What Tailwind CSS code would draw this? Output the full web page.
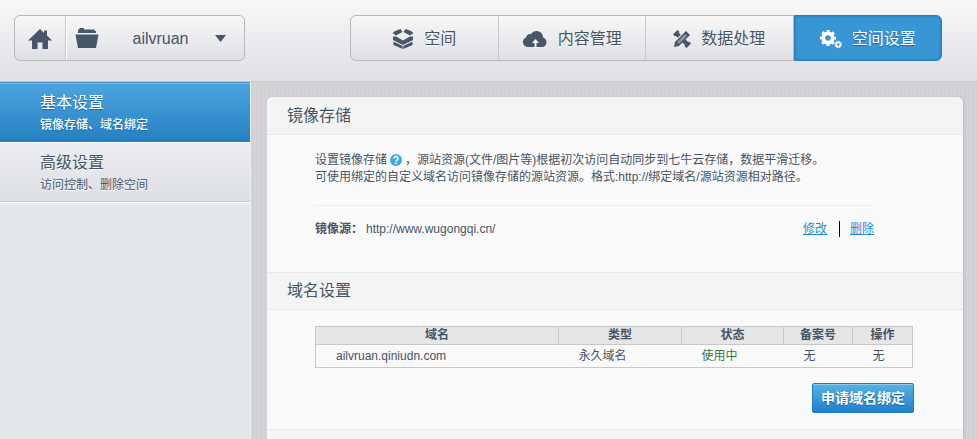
<!DOCTYPE html>
<html lang="zh-CN">

<head>
    <meta charset="UTF-8">
    <title>空间设置</title>
    <script src="https://cdn.jsdelivr.net/npm/@tailwindcss/browser@4"></script>
</head>

<body class="min-h-screen flex flex-col bg-[#d2d3d7] bg-[repeating-linear-gradient(90deg,#d0d1d5_0px,#d0d1d5_2px,#d3d4d8_2px,#d3d4d8_4px)] text-xs text-[#475466] font-['Liberation_Sans','Noto_Sans_CJK_SC',sans-serif]">
    <header class="flex justify-between items-start pt-[15px] pb-5 pl-[14px] pr-[35px] bg-linear-to-b from-[#f8f8f8] to-[#dfe0e6] border-b border-[#c6c8cf] text-base [text-shadow:0_1px_0_#fff]">
        <div class="flex w-[231px] h-[46px] border border-[#b8b8b8] rounded-md bg-linear-to-b from-[#f8f8f8] to-[#dfe0e6]">
            <a href="#" aria-label="首页" class="w-[51px] flex items-center justify-center border-r border-[#c8c9cc]">
                <svg class="w-6 h-5 mt-0.5" viewBox="0 0 24 20" fill="#475669">
                    <path d="M12 0 L16 4 V1.500 H19 V6.500 L24 11.500 H20 V20 H14.500 V13.500 H9.500 V20 H4 V11.500 H0 Z" />
                </svg>
            </a>
            <button type="button" class="flex-1 flex items-center border-l border-white pl-2 pr-[18px]">
                <svg class="w-6 h-5" viewBox="0 0 24 20" fill="#475669">
                    <path d="M3 5 V1.500 H4.500 V0 H9 V1.500 H19.500 V3 H21 V5 Z" />
                    <path d="M0.500 6.500 H23.500 L21 20 H3 Z" />
                </svg>
                <span class="flex-1 text-center pl-5 pt-0.5">ailvruan</span>
                <svg class="w-[11px] h-[7px] ml-[13px]" viewBox="0 0 11 7" fill="#475669">
                    <path d="M0 0 H11 L5.500 7 Z" />
                </svg>
            </button>
        </div>

        <nav class="grid grid-cols-4 w-[592px] h-[46px] border border-[#b8b8b8] rounded-md bg-linear-to-b from-[#f8f8f8] to-[#dfe0e6]">
            <a href="#" class="flex items-center justify-center gap-2.5 pt-0.5 border-r border-[#c8c9cc]">
                <svg class="w-[22px] h-5" viewBox="0 0 22 20" fill="#475669">
                    <path d="M3 2 L8.500 0 L10.500 3 L4 6.500 L0.500 4 Z" />
                    <path d="M19 2 L13.500 0 L11.500 3 L18 6.500 L21.500 4 Z" />
                    <path d="M1 7.500 L4 7.500 L11 11.500 L18 7.500 L21 7.500 V11 L11 16 L1 11 Z" />
                    <path d="M1.500 12.500 L10.700 17 V20 L1.500 16 Z" />
                    <path d="M20.500 12.500 L11.300 17 V20 L20.500 16 Z" />
                </svg>
                空间
            </a>
            <a href="#" class="flex items-center justify-center gap-2.5 pt-0.5 border-r border-[#c8c9cc]">
                <svg class="w-[26px] h-[18px]" viewBox="0 0 26 18" fill="#475669">
                    <path d="M5 17 A5 5 0 0 1 4 7.500 A4.500 4.500 0 0 1 9 4 A6.500 6.500 0 0 1 21 7.500 A5 5 0 0 1 21 17 Z" />
                    <path d="M13.500 9 L17 13 H14.500 V18 H12.500 V13 H10 Z" fill="#f5f6f8" />
                </svg>
                内容管理
            </a>
            <a href="#" class="flex items-center justify-center gap-2.5 pt-0.5 border-r border-[#b8b8b8]">
                <svg class="w-[18px] h-[18px]" viewBox="0 0 18 18" fill="none">
                    <path d="M3 3 L15 15" stroke="#475669" stroke-width="4.500" />
                    <path d="M1 5.500 L5.500 1 M12.500 17 L17 12.500" stroke="#475669" stroke-width="3" />
                    <path d="M14 3 L4 13" stroke="#eceef0" stroke-width="6.500" />
                    <path d="M13 1 L17 5 L6 16 L1 17 L2 12 Z" fill="#475669" />
                    <path d="M13 5 L5 13" stroke="#8b95a2" stroke-width="2.500" />
                </svg>
                数据处理
            </a>
            <a href="#" aria-current="page" class="flex items-center justify-center gap-2.5 pt-0.5 -my-px -mr-px border border-[#2c7fbd] rounded-r-md bg-[#3896d5] text-white shadow-[inset_0_0_3px_#1f6fad] [text-shadow:0_1px_1px_#1d6ba5]">
                <svg class="w-[22px] h-5" viewBox="0 0 22 20" fill="none" stroke="#fff">
                    <circle cx="8" cy="9" r="4.700" stroke-width="3.800" />
                    <circle cx="8" cy="9" r="7" stroke-width="2.200" stroke-dasharray="3 2.498" stroke-dashoffset="1.500" />
                    <circle cx="18.200" cy="15.500" r="2.200" stroke-width="1.800" />
                    <circle cx="18.200" cy="15.500" r="3.300" stroke-width="1" stroke-dasharray="1.400 1.192" />
                </svg>
                空间设置
            </a>
        </nav>
    </header>

    <div class="flex flex-1">
        <aside class="w-[251px] shrink-0 bg-[#e4e7ec] border-r border-[#eceef1]">
            <a href="#" class="block h-[60px] pt-2 pl-10 bg-linear-to-b from-[#4ca5e1] to-[#2580c0] border-t border-[#4a8fc2] text-white shadow-[inset_0_1px_0_#7dbbe4] [text-shadow:0_1px_1px_#1d6ba5]">
                <span class="block text-base leading-6">基本设置</span>
                <span class="block leading-5 font-medium">镜像存储、域名绑定</span>
            </a>
            <a href="#" class="block h-[60px] pt-2 pl-10 bg-linear-to-b from-[#ecedf1] to-[#dcdfe5] border-t border-white border-b border-b-[#c8cad0] [text-shadow:0_1px_0_#fff]">
                <span class="block text-base leading-6">高级设置</span>
                <span class="block leading-5">访问控制、删除空间</span>
            </a>
            <div class="border-t border-white"></div>
        </aside>

        <main class="flex-1 mt-[15px] ml-4 mr-[14px] bg-[#fafafa] rounded-t-md shadow-[1px_0_2px_#b9babe]">
            <section>
                <h2 class="h-[38px] pl-5 text-base leading-[37px] bg-[#f4f4f4] border-b border-[#e8e8e8] rounded-t-md">镜像存储</h2>
                <div class="pt-[17px] pl-12 pr-[89px] pb-[34px]">
                    <p class="leading-[17px] pb-[19px] border-b border-[#ececec]">
                        设置镜像存储<svg class="inline-block w-3 h-3 mx-[3px] -mt-0.5" viewBox="0 0 12 12">
                            <circle cx="6" cy="6" r="6" fill="#45a8de" />
                            <path d="M4 4.600 A2 1.900 0 1 1 6.800 6.200 Q6 6.600 6 7.500" fill="none" stroke="#fff" stroke-width="1.500" />
                            <rect x="5.200" y="8.500" width="1.600" height="1.600" fill="#fff" />
                        </svg>，源站资源(文件/图片等)根据初次访问自动同步到七牛云存储，数据平滑迁移。<br>
                        可使用绑定的自定义域名访问镜像存储的源站资源。格式:http://绑定域名/源站资源相对路径。
                    </p>
                    <div class="flex items-center pt-[14px] leading-[18px]">
                        <b>镜像源：</b>
                        <span class="ml-[3px]">http://www.wugongqi.cn/</span>
                        <a href="#" class="ml-auto text-[#1a8fdb] underline">修改</a>
                        <span class="w-px h-4 ml-3 mr-2.5 bg-black"></span>
                        <a href="#" class="text-[#1a8fdb] underline">删除</a>
                    </div>
                </div>
            </section>

            <section>
                <h2 class="h-[38px] pl-5 text-base leading-9 bg-[#f4f4f4] border-y border-[#e8e8e8]">域名设置</h2>
                <div class="pt-4 pl-12 pr-[49px] pb-4">
                    <div class="pr-px">
                        <table class="w-full table-fixed border-collapse border border-[#c8c8c8]">
                            <thead class="bg-[#e6e6e6] leading-[17px]">
                                <tr>
                                    <th class="border border-[#c8c8c8]">域名</th>
                                    <th class="w-[123px] border border-[#c8c8c8]">类型</th>
                                    <th class="w-[102px] border border-[#c8c8c8]">状态</th>
                                    <th class="w-[69px] border border-[#c8c8c8]">备案号</th>
                                    <th class="w-[60px] border border-[#c8c8c8]">操作</th>
                                </tr>
                            </thead>
                            <tbody class="leading-[22px]">
                                <tr>
                                    <td class="pl-5">ailvruan.qiniudn.com</td>
                                    <td class="pl-5">永久域名</td>
                                    <td class="pl-5 text-[#347539]">使用中</td>
                                    <td class="pl-5">无</td>
                                    <td class="pl-5">无</td>
                                </tr>
                            </tbody>
                        </table>
                    </div>
                    <div class="flex justify-end pt-[15px]">
                        <button type="button" class="h-[30px] px-2 text-sm leading-7 font-bold text-white bg-linear-to-b from-[#58b2e4] to-[#1e80cc] border border-[#1e7fc4] rounded-xs shadow-[inset_0_1px_0_#8fcbed] [text-shadow:0_1px_1px_#17639d]">申请域名绑定</button>
                    </div>
                </div>
            </section>

            <div class="h-[10px] bg-[#f4f4f4] border-t border-[#e8e8e8]"></div>
        </main>
    </div>
</body>

</html>
